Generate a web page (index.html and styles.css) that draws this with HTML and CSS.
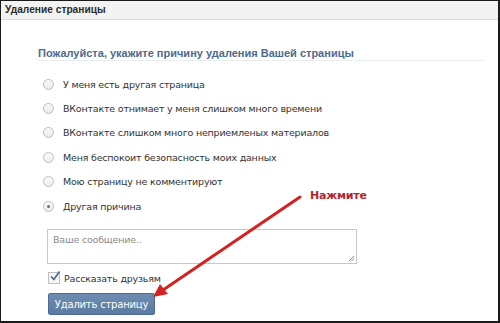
FILE: index.html
```html
<!DOCTYPE html>
<html lang="ru">
<head>
<meta charset="utf-8">
<link rel="stylesheet" href="styles.css">
</head>
<body>
<div class="frame">
  <div class="titlebar">Удаление страницы</div>
  <div class="content">
    <h2 class="heading">Пожалуйста, укажите причину удаления Вашей страницы</h2>
    <ul class="reasons">
      <li class="reason"><span class="radio"></span>У меня есть другая страница</li>
      <li class="reason"><span class="radio"></span>ВКонтакте отнимает у меня слишком много времени</li>
      <li class="reason"><span class="radio"></span>ВКонтакте слишком много неприемленых материалов</li>
      <li class="reason"><span class="radio"></span>Меня беспокоит безопасность моих данных</li>
      <li class="reason"><span class="radio"></span>Мою страницу не комментируют</li>
      <li class="reason"><span class="radio checked"></span>Другая причина</li>
    </ul>
    <div class="message">
      <span class="placeholder">Ваше сообщение..</span>
      <svg class="grip" width="7" height="7" viewBox="0 0 7 7"><path d="M6 1 L1 6 M6 3.5 L3.5 6" stroke="#888" stroke-width="1"/></svg>
    </div>
    <label class="tell"><span class="checkbox"><svg width="12" height="12" viewBox="0 0 12 12"><path d="M2 6.5 L4.8 9.5 L10.5 1.5" fill="none" stroke="#4a6688" stroke-width="1.6"/></svg></span>Рассказать друзьям</label>
    <button class="delete">Удалить страницу</button>
  </div>
  <div class="hint">Нажмите</div>
  <svg class="arrow" width="500" height="323" viewBox="0 0 500 323">
    <line x1="300" y1="197" x2="163" y2="290" stroke="#d42121" stroke-width="3" stroke-linecap="round"/>
    <polygon points="153,297 160,284 168,294" fill="#d42121"/>
  </svg>
</div>
</body>
</html>
```

FILE: styles.css
```css
* { box-sizing: border-box; }
html, body { margin: 0; padding: 0; }
body {
  width: 500px;
  height: 323px;
  background: #1b1b1b;
  font-family: Tahoma, "DejaVu Sans", sans-serif;
  overflow: hidden;
}
.frame {
  position: relative;
  margin: 1px 2px 0 1px;
  height: 320px;
  background: #fff;
  display: flex;
  flex-direction: column;
}
.titlebar {
  height: 19px;
  background: #f3f3f3;
  border-bottom: 1px solid #dcdcdc;
  font-family: "Liberation Sans", Arial, sans-serif;
  font-weight: bold;
  font-size: 10.2px;
  color: #2b2b2b;
  padding: 3px 0 0 4px;
}
.content {
  padding: 27px 14px 0 37px;
  display: flex;
  flex-direction: column;
  align-items: flex-start;
}
.heading {
  margin: 0;
  width: 446px;
  font-family: "Liberation Sans", Arial, sans-serif;
  font-size: 11px;
  font-weight: bold;
  color: #4d6a8d;
  padding-bottom: 1px;
  border-bottom: 1px solid #eaedf0;
}
.reasons {
  list-style: none;
  margin: 16px 0 0 0;
  padding: 0 0 0 5px;
  display: flex;
  flex-direction: column;
  gap: 10.1px;
}
.reason {
  display: flex;
  align-items: center;
  height: 14.3px;
  font-family: "DejaVu Sans", sans-serif;
  font-size: 9.5px;
  color: #333;
  letter-spacing: -0.2px;
}
.radio {
  width: 11px;
  height: 11px;
  border-radius: 50%;
  border: 1px solid #bdbdbd;
  background: linear-gradient(#fafafa, #ececec);
  margin-right: 9px;
  position: relative;
  flex: none;
}
.radio.checked::after {
  content: "";
  position: absolute;
  left: 3px;
  top: 3px;
  width: 3px;
  height: 3px;
  border-radius: 50%;
  background: #6a6a6a;
}
.message {
  position: relative;
  margin: 16px 0 0 9px;
  width: 310px;
  height: 35px;
  border: 1px solid #c8c8c8;
  padding: 4px 5px;
  font-family: "DejaVu Sans", sans-serif;
  font-size: 9.5px;
  color: #8a8a8a;
  letter-spacing: -0.2px;
}
.grip {
  position: absolute;
  right: 1px;
  bottom: 1px;
}
.tell {
  display: flex;
  align-items: center;
  margin: 8px 0 0 10px;
  font-family: "DejaVu Sans", sans-serif;
  font-size: 9.5px;
  color: #333;
  letter-spacing: -0.2px;
}
.checkbox {
  width: 12px;
  height: 12px;
  border: 1px solid #bdbdbd;
  background: #f7f7f7;
  margin-right: 4px;
  position: relative;
  display: flex;
}
.checkbox svg {
  position: absolute;
  left: 0;
  top: -3px;
}
.delete {
  margin: 9px 0 0 10px;
  width: 107px;
  height: 22px;
  border: 1px solid #4c6c91;
  border-radius: 2px;
  background: linear-gradient(#6d8db2, #5a7aa1);
  color: #fff;
  font-family: "DejaVu Sans", sans-serif;
  font-size: 10px;
  letter-spacing: -0.2px;
  padding: 0;
}
.hint {
  position: absolute;
  left: 309px;
  top: 188px;
  font-family: "DejaVu Sans", sans-serif;
  font-weight: bold;
  font-size: 11px;
  color: #b8242a;
  letter-spacing: -0.2px;
}
.arrow {
  position: absolute;
  left: -1px;
  top: -1px;
  pointer-events: none;
}
```
